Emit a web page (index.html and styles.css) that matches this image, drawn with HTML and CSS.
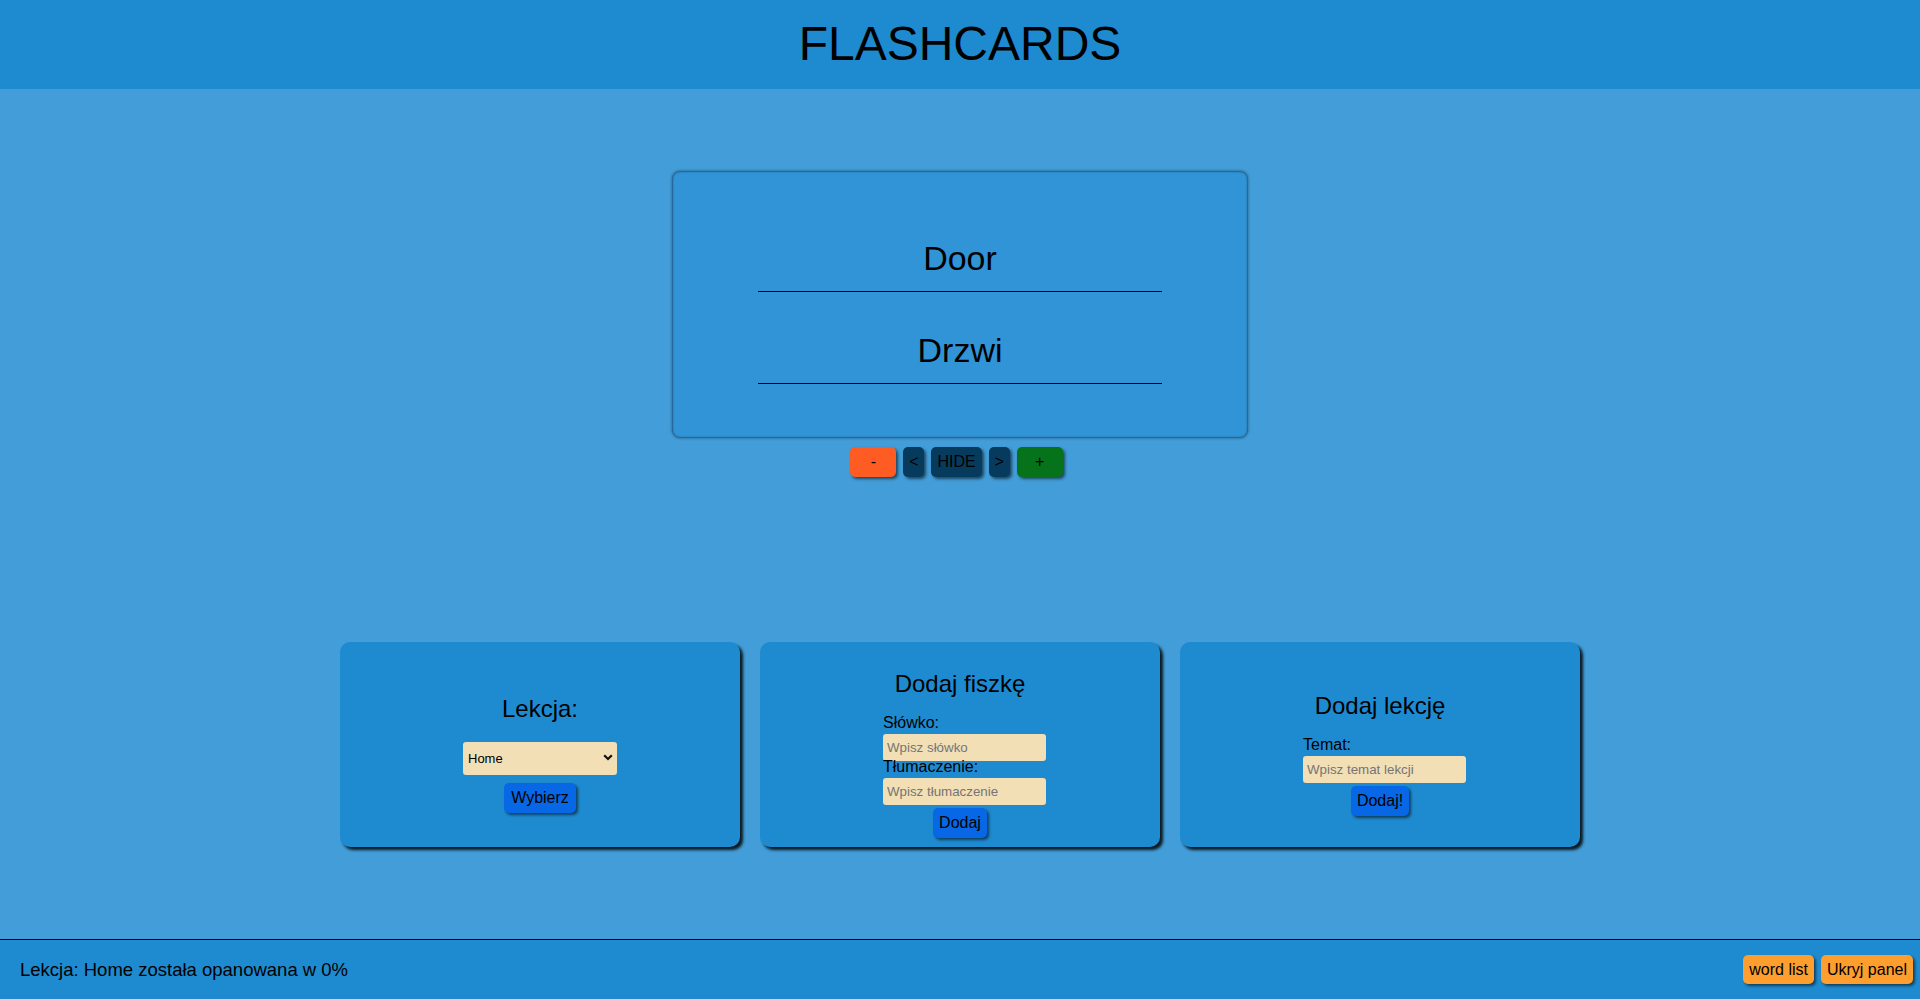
FILE: index.html
```html
<!DOCTYPE html>
<html lang="pl">
<head>
<meta charset="utf-8">
<title>Flashcards</title>
<link rel="stylesheet" href="styles.css">
</head>
<body>
<header class="top">
  <h1 class="title">FLASHCARDS</h1>
</header>
<main class="main">
  <section class="card">
    <div class="word">Door</div>
    <div class="word word-second">Drzwi</div>
  </section>
  <div class="controls">
    <button class="btn btn-minus">-</button>
    <button class="btn btn-dark btn-arrow">&lt;</button>
    <button class="btn btn-dark">HIDE</button>
    <button class="btn btn-dark btn-arrow">&gt;</button>
    <button class="btn btn-plus">+</button>
  </div>
  <div class="panels">
    <div class="panel">
      <h3 class="panel-title">Lekcja:</h3>
      <div class="select-wrap">
        <select class="select"><option>Home</option></select>
        <svg class="chevron" width="10" height="7" viewBox="0 0 10 7"><polyline points="1.2,1.2 5,5 8.8,1.2" fill="none" stroke="#111" stroke-width="2.2"/></svg>
      </div>
      <button class="btn btn-blue btn-select">Wybierz</button>
    </div>
    <div class="panel">
      <h3 class="panel-title">Dodaj fiszkę</h3>
      <div class="form">
        <label class="label">Słówko:</label>
        <input class="input" placeholder="Wpisz słówko">
        <label class="label">Tłumaczenie:</label>
        <input class="input" placeholder="Wpisz tłumaczenie">
      </div>
      <button class="btn btn-blue btn-form">Dodaj</button>
    </div>
    <div class="panel">
      <h3 class="panel-title">Dodaj lekcję</h3>
      <div class="form">
        <label class="label">Temat:</label>
        <input class="input" placeholder="Wpisz temat lekcji">
      </div>
      <button class="btn btn-blue btn-form">Dodaj!</button>
    </div>
  </div>
</main>
<footer class="bottom">
  <span class="status">Lekcja: Home została opanowana w 0%</span>
  <div class="bottom-actions">
    <button class="btn btn-orange">word list</button>
    <button class="btn btn-orange">Ukryj panel</button>
  </div>
</footer>
</body>
</html>
```
FILE: styles.css
```css
* { box-sizing: border-box; }
html, body { margin: 0; padding: 0; }
body {
  font-family: "Liberation Sans", Arial, sans-serif;
  background: #429dd8;
  color: #000;
  min-height: 100vh;
  display: flex;
  flex-direction: column;
}
.top {
  background: #1e8bd1;
  height: 89px;
  padding-top: 16px;
  text-align: center;
}
.title {
  margin: 0;
  font-size: 48px;
  font-weight: 400;
  line-height: 55px;
}
.main {
  display: flex;
  flex-direction: column;
  align-items: center;
  padding-top: 82px;
}
.card {
  width: 576px;
  height: 267px;
  background: #3094d7;
  border: 1px solid #26689a;
  border-radius: 8px;
  box-shadow: 0 0 3px rgba(0,0,0,0.45), inset 0 0 2px rgba(0,0,0,0.25);
  display: flex;
  flex-direction: column;
  align-items: center;
  padding-top: 67px;
}
.word {
  width: 404px;
  text-align: center;
  font-size: 34px;
  line-height: 39px;
  padding-bottom: 13px;
  border-bottom: 1px solid #000;
}
.word-second { margin-top: 39px; }
.controls {
  display: flex;
  gap: 7px;
  margin-top: 9px;
  margin-right: 7px;
}
.btn {
  font-family: "Liberation Sans", Arial, sans-serif;
  font-size: 16px;
  line-height: 18px;
  color: #000;
  border: none;
  border-radius: 5px;
  padding: 6px 6px;
  height: 30px;
  box-shadow: 2px 2px 3px rgba(0,0,0,0.55);
  cursor: pointer;
}
.btn-minus { background: #fe5c22; width: 46px; }
.btn-plus { background: #06731a; width: 46px; }
.btn-dark { background: #073b5e; }
.btn-arrow { width: 21px; padding: 6px 0; }
.btn-blue { background: #0767e4; }
.panels {
  display: flex;
  gap: 20px;
  margin-top: 165px;
}
.panel {
  width: 400px;
  height: 205px;
  background: #1e8bd1;
  border-radius: 10px;
  box-shadow: 3px 3px 3px rgba(0,0,0,0.85);
  display: flex;
  flex-direction: column;
  align-items: center;
  justify-content: center;
}
.panel-title {
  margin: 18px 0 19px;
  font-size: 24px;
  line-height: 28px;
  font-weight: 400;
}
.select-wrap { position: relative; }
.select {
  display: block;
  width: 154px;
  height: 33px;
  -webkit-appearance: none;
  appearance: none;
  background: #f2dfb5;
  border: none;
  border-radius: 3px;
  font-family: "Liberation Sans", Arial, sans-serif;
  font-size: 13px;
  color: #000;
  padding: 0 5px;
}
.chevron {
  position: absolute;
  right: 4px;
  top: 12px;
  pointer-events: none;
}
.btn-select { margin-top: 8px; padding: 6px 7px; }
.form {
  display: flex;
  flex-direction: column;
  width: 163px;
  margin-left: 9px;
}
.label {
  font-size: 16px;
  line-height: 12px;
  padding-bottom: 5px;
}
.input {
  width: 163px;
  height: 27px;
  background: #f2dfb5;
  border: none;
  border-radius: 3px;
  font-family: "Liberation Sans", Arial, sans-serif;
  font-size: 13.33px;
  padding: 0 4px;
}
.input::placeholder { color: #757575; }
.btn-form { margin-top: 3px; padding: 6px 6px; }
.bottom {
  margin-top: auto;
  height: 60px;
  background: #1e8bd1;
  border-top: 1px solid #000;
  display: flex;
  align-items: center;
  justify-content: space-between;
  padding: 0 7px 0 20px;
}
.status { font-size: 18.5px; }
.bottom-actions { display: flex; gap: 7px; }
.btn-orange { background: #fd9e2f; height: 29px; padding: 5px 6px; }
```
